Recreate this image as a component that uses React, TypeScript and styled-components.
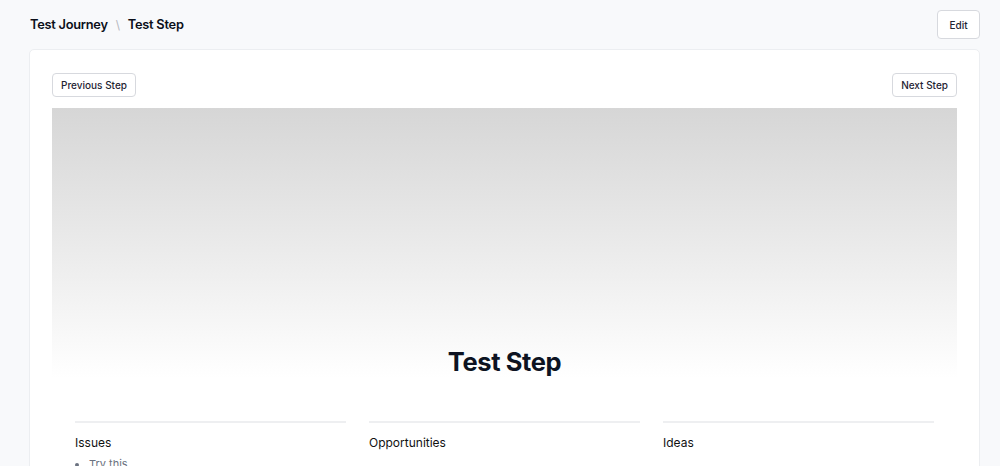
import styled, { createGlobalStyle } from "styled-components";

const columns = [
  { title: "Issues", items: ["Try this"] },
  { title: "Opportunities", items: [] as string[] },
  { title: "Ideas", items: [] as string[] },
];

const App: React.FC = () => {
  return (
    <Page>
      <GlobalStyle />
      <Header>
        <Breadcrumb>
          <span>Test Journey</span>
          <Separator>\</Separator>
          <span>Test Step</span>
        </Breadcrumb>
        <Button $size='large'>Edit</Button>
      </Header>
      <Card>
        <StepNav>
          <Button>Previous Step</Button>
          <Button>Next Step</Button>
        </StepNav>
        <Hero>
          <HeroTitle>Test Step</HeroTitle>
        </Hero>
        <Columns>
          {columns.map((col) => (
            <Column key={col.title}>
              <ColumnTitle>{col.title}</ColumnTitle>
              {col.items.length > 0 && (
                <ItemList>
                  {col.items.map((item) => (
                    <li key={item}>{item}</li>
                  ))}
                </ItemList>
              )}
            </Column>
          ))}
        </Columns>
      </Card>
    </Page>
  );
};

const GlobalStyle = createGlobalStyle`
  html, body {
    margin: 0;
    padding: 0;
    background: #f8f9fb;
    font-family: Inter, "Noto Sans", sans-serif;
    color: #111827;
  }
`;

const Page = styled.div`
  padding: 0 20px 0 29px;
  min-height: 466px;
  box-sizing: border-box;
`;

const Header = styled.div`
  height: 49px;
  display: flex;
  align-items: center;
  justify-content: space-between;
`;

const Breadcrumb = styled.div`
  display: flex;
  align-items: center;
  gap: 8px;
  padding-left: 1px;
  font-size: 12.8px;
  font-weight: 600;
  color: #0b0f19;
  letter-spacing: -0.25px;
`;

const Separator = styled.span`
  color: #b5b8bf;
  font-weight: 400;
  font-size: 12px;
`;

const Button = styled.button<{ $size?: "large" }>`
  font-family: Inter, "Noto Sans", sans-serif;
  font-size: 10px;
  font-weight: 500;
  color: #1f2433;
  background: #ffffff;
  border: 1px solid #d7d9de;
  border-radius: 4px;
  padding: 0 8px;
  height: ${(p) => (p.$size === "large" ? "29px" : "24px")};
  width: ${(p) => (p.$size === "large" ? "43px" : "auto")};
  cursor: pointer;
`;

const Card = styled.div`
  background: #ffffff;
  border: 1px solid #eceef1;
  border-radius: 5px;
  padding: 23px 22px 0 22px;
  min-height: 420px;
  box-sizing: border-box;
`;

const StepNav = styled.div`
  display: flex;
  justify-content: space-between;
  align-items: center;
  margin-bottom: 11px;
`;

const Hero = styled.div`
  height: 270px;
  background: linear-gradient(to bottom, #d6d6d6 0%, #ececec 55%, #ffffff 100%);
  display: flex;
  align-items: flex-end;
  justify-content: center;
  padding-bottom: 1px;
  box-sizing: border-box;
`;

const HeroTitle = styled.h1`
  margin: 0;
  font-size: 25.5px;
  font-weight: 700;
  color: #0d1322;
  letter-spacing: -0.4px;
`;

const Columns = styled.div`
  display: grid;
  grid-template-columns: repeat(3, 1fr);
  gap: 23px;
  padding: 43px 23px 0 23px;
`;

const Column = styled.div`
  border-top: 2px solid #eeeff1;
  padding-top: 12px;
`;

const ColumnTitle = styled.div`
  font-size: 12px;
  color: #111;
  font-weight: 400;
`;

const ItemList = styled.ul`
  margin: 7px 0 0 0;
  padding-left: 14px;
  font-size: 11px;
  color: #6b7280;
  li::marker {
    color: #6b7280;
  }
`;

export default App;
